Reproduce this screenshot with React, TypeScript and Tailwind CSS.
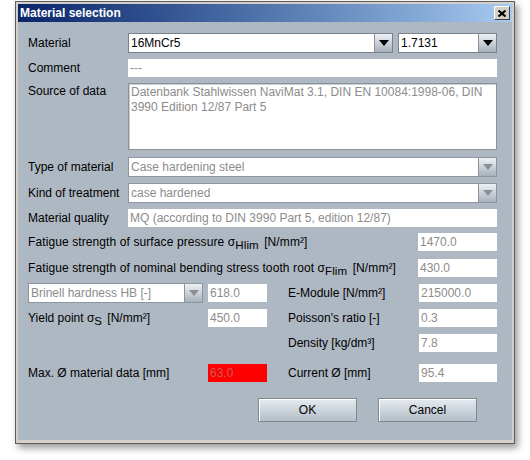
import type { ReactNode } from 'react';

function Arrow({ enabled }: { enabled: boolean }) {
  return (
    <div className="flex h-full w-[18px] shrink-0 items-center justify-center border-l border-[#8a939c] bg-gradient-to-b from-[#eef2f5] to-[#a7b1bb]">
      <svg width="10" height="6" viewBox="0 0 10 6">
        <path d="M0 0 H10 L5 6 Z" fill={enabled ? '#000' : '#8a8f94'} />
      </svg>
    </div>
  );
}

function Combo({ value, enabled, className }: { value: string; enabled: boolean; className: string }) {
  return (
    <div className={`flex h-[20px] items-stretch border bg-white ${enabled ? 'border-[#7a838c]' : 'border-[#8d959d]'} ${className}`}>
      <div className={`flex flex-1 items-center overflow-hidden whitespace-nowrap pl-[2px] ${enabled ? 'text-black' : 'text-[#8c8c8c]'}`}>
        {value}
      </div>
      <Arrow enabled={enabled} />
    </div>
  );
}

function Field({ value, className }: { value: string; className: string }) {
  return (
    <div className={`flex h-[18px] items-center whitespace-nowrap bg-white pl-[2px] text-[#8c8c8c] ${className}`}>
      {value}
    </div>
  );
}

// sigma with a lowered index, as the Swing labels draw it
function Sigma({ sub }: { sub: string }) {
  return (
    <>
      σ<sub className="relative top-[3px] mr-[2px] text-[11.5px]">{sub}</sub>
    </>
  );
}

function Row({ label, mt, children }: { label: ReactNode; mt: string; children: ReactNode }) {
  return (
    <div className={`flex items-center ${mt}`}>
      <div className="w-[100px] shrink-0 whitespace-nowrap">{label}</div>
      {children}
    </div>
  );
}

export default function App() {
  return (
    <div className="min-h-[460px] bg-white pl-[15px] pt-px font-['Liberation_Sans',Arial,sans-serif] text-[12px] text-black">
      <div className="h-[443px] w-[500px] border border-[#5d5d5d] bg-[#d4d0c8] p-[2px] shadow-[3px_4px_7px_rgba(0,0,0,0.4)]">
        {/* title bar */}
        <div className="flex h-[18px] items-center justify-between bg-gradient-to-r from-[#0a246a] to-[#a6caf0] pl-[2px] pr-[2px]">
          <span className="text-[12px] font-bold text-white">Material selection</span>
          <div className="flex h-[14px] w-[16px] items-center justify-center border border-b-[#404040] border-l-white border-r-[#404040] border-t-white bg-[#d4d0c8]">
            <svg width="8" height="7" viewBox="0 0 8 7">
              <path d="M0.5 0.5 L7.5 6.5 M7.5 0.5 L0.5 6.5" stroke="#000" strokeWidth="2" />
            </svg>
          </div>
        </div>

        {/* body */}
        <div className="flex h-[418px] flex-col bg-[#aeb8c3] pl-[10px] pr-[15px] pt-[11px]">
          <Row label="Material" mt="">
            <Combo value="16MnCr5" enabled className="w-[265px]" />
            <Combo value="1.7131" enabled className="ml-[5px] flex-1" />
          </Row>

          <Row label="Comment" mt="mt-[6px]">
            <Field value="---" className="flex-1" />
          </Row>

          <div className="mt-[6px] flex">
            <div className="w-[100px] shrink-0 pt-[1px] leading-[15px]">Source of data</div>
            <div className="h-[67px] flex-1 border border-[#8a929a] bg-white pl-[2px] pt-[1px] leading-[15px] text-[#8c8c8c] shadow-[inset_1px_1px_0_#c8ced4]">
              Datenbank Stahlwissen NaviMat 3.1, DIN EN 10084:1998-06, DIN
              <br />
              3990 Edition 12/87 Part 5
            </div>
          </div>

          <Row label="Type of material" mt="mt-[7px]">
            <Combo value="Case hardening steel" enabled={false} className="flex-1" />
          </Row>

          <Row label="Kind of treatment" mt="mt-[6px]">
            <Combo value="case hardened" enabled={false} className="flex-1" />
          </Row>

          <Row label="Material quality" mt="mt-[6px]">
            <Field value="MQ (according to DIN 3990 Part 5, edition 12/87)" className="flex-1" />
          </Row>

          <div className="mt-[6px] flex items-center justify-between">
            <span className="tracking-[0.1px]">
              Fatigue strength of surface pressure <Sigma sub="Hlim" /> [N/mm²]
            </span>
            <Field value="1470.0" className="w-[79px]" />
          </div>

          <div className="mt-[8px] flex items-center justify-between">
            <span className="tracking-[0.1px]">
              Fatigue strength of nominal bending stress tooth root <Sigma sub="Flim" /> [N/mm²]
            </span>
            <Field value="430.0" className="w-[79px]" />
          </div>

          {/* lower block */}
          <div className="mt-[6px] flex items-center">
            <Combo value="Brinell hardness HB [-]" enabled={false} className="w-[175px]" />
            <Field value="618.0" className="ml-[5px] w-[59px]" />
            <span className="ml-[21px]">E-Module [N/mm²]</span>
            <Field value="215000.0" className="ml-auto w-[78px]" />
          </div>

          <div className="mt-[6px] flex items-center">
            <span className="w-[180px]">
              Yield point <Sigma sub="S" /> [N/mm²]
            </span>
            <Field value="450.0" className="w-[59px]" />
            <span className="ml-[21px]">Poisson's ratio [-]</span>
            <Field value="0.3" className="ml-auto w-[78px]" />
          </div>

          <div className="mt-[7px] flex items-center">
            <span className="ml-[260px]">Density [kg/dm³]</span>
            <Field value="7.8" className="ml-auto w-[78px]" />
          </div>

          <div className="mt-[12px] flex items-center">
            <span className="w-[180px]">Max. Ø material data [mm]</span>
            <div className="flex h-[18px] w-[59px] items-center bg-[#ff0000] pl-[2px] text-[#c85a5a]">63.0</div>
            <span className="ml-[21px]">Current Ø [mm]</span>
            <Field value="95.4" className="ml-auto w-[78px]" />
          </div>

          <div className="mt-[16px] flex justify-end gap-[21px] pr-[20px]">
            {['OK', 'Cancel'].map((t) => (
              <button
                key={t}
                className="h-[24px] w-[99px] border border-[#7f8992] bg-gradient-to-b from-[#e6ebf0] to-[#b4bec8] text-[12px] text-black shadow-[inset_1px_1px_0_#ffffff]"
              >
                {t}
              </button>
            ))}
          </div>
        </div>
      </div>
    </div>
  );
}
